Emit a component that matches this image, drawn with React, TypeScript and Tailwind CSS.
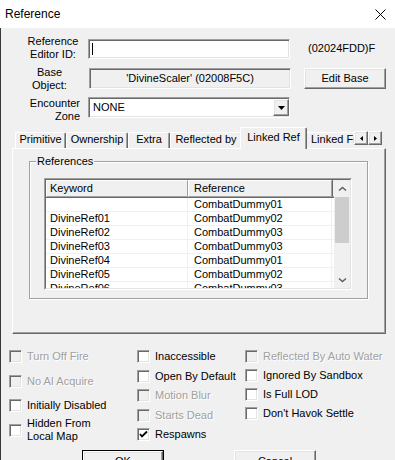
import React from "react";

const sunken =
  "border border-t-[#a0a0a0] border-l-[#a0a0a0] border-b-white border-r-white shadow-[inset_1px_1px_0_#696969,inset_-1px_-1px_0_#e3e3e3]";
const raised =
  "border border-t-white border-l-white border-b-[#696969] border-r-[#696969] shadow-[inset_-1px_-1px_0_#a0a0a0,inset_1px_1px_0_#e3e3e3]";

const rows = [
  ["", "CombatDummy01"],
  ["DivineRef01", "CombatDummy02"],
  ["DivineRef02", "CombatDummy03"],
  ["DivineRef03", "CombatDummy03"],
  ["DivineRef04", "CombatDummy01"],
  ["DivineRef05", "CombatDummy02"],
  ["DivineRef06", "CombatDummy03"],
];

const Check = ({
  label,
  checked = false,
  disabled = false,
  className = "",
}: {
  label: React.ReactNode;
  checked?: boolean;
  disabled?: boolean;
  className?: string;
}) => (
  <div className={`flex items-center gap-[5px] ${className}`}>
    <div
      className={`h-[13px] w-[13px] shrink-0 flex items-center justify-center ${sunken} ${
        disabled ? "bg-[#f0f0f0]" : "bg-white"
      }`}
    >
      {checked && (
        <svg width="9" height="9" viewBox="0 0 9 9">
          <polyline points="1,4 3,6.5 8,1.5" fill="none" stroke="#000" strokeWidth="1.8" />
        </svg>
      )}
    </div>
    <div
      className={`leading-[13px] whitespace-nowrap ${
        disabled ? "text-[#a0a0a0] [text-shadow:1px_1px_0_#fff]" : ""
      }`}
    >
      {label}
    </div>
  </div>
);

const Chevron = ({ down = false }: { down?: boolean }) => (
  <svg width="9" height="6" viewBox="0 0 9 6">
    <path
      d={down ? "M1 1.5 L4.5 4.5 L8 1.5" : "M1 4.5 L4.5 1.5 L8 4.5"}
      fill="none"
      stroke="#606060"
      strokeWidth="1.5"
    />
  </svg>
);

const tabBase =
  "shrink-0 border-t border-l border-white border-r border-r-[#696969] shadow-[inset_-1px_0_0_#a0a0a0] text-center leading-[13px] whitespace-nowrap overflow-hidden rounded-tl-[2px] rounded-tr-[2px]";

export default function App() {
  return (
    <div className="w-[395px] h-[460px] overflow-hidden bg-[#f0f0f0] font-['Liberation_Sans',Arial,sans-serif] text-[11px] text-black">
      {/* Title bar */}
      <div className="h-[28px] bg-white flex items-center justify-between pl-[5px] pr-[9px]">
        <span className="text-[12px]">Reference</span>
        <svg width="11" height="11" viewBox="0 0 11 11">
          <path d="M0.5 0.5 L10.5 10.5 M10.5 0.5 L0.5 10.5" stroke="#000" strokeWidth="1" />
        </svg>
      </div>

      <div className="h-[432px] border-l border-[#3a3a3a]">
        {/* Editor ID */}
        <div className="flex items-start pt-[7px]">
          <div className="ml-[17px] w-[70px] text-center leading-[12.5px]">
            Reference
            <br />
            Editor ID:
          </div>
          <div className={`mt-[4px] h-[20px] w-[202px] bg-white flex items-center pl-[3px] ${sunken}`}>
            <div className="h-[12px] w-px bg-black" />
          </div>
          <div className="ml-[18px] mt-[7px] leading-[12.5px]">(02024FDD)F</div>
        </div>

        {/* Base object */}
        <div className="flex items-start mt-[6px]">
          <div className="ml-[10px] w-[77px] text-center leading-[13px]">
            Base
            <br />
            Object:
          </div>
          <div className={`ml-px mt-[2px] h-[21px] w-[202px] flex items-center justify-center ${sunken}`}>
            'DivineScaler' (02008F5C)
          </div>
          <div className={`ml-[13px] mt-[2px] h-[21px] w-[82px] flex items-center justify-center ${raised}`}>
            Edit Base
          </div>
        </div>

        {/* Encounter zone */}
        <div className="flex items-start mt-[5px]">
          <div className="w-[79px] text-right leading-[13px]">
            Encounter
            <br />
            Zone
          </div>
          <div className={`ml-[8px] h-[21px] w-[202px] bg-white flex items-center ${sunken}`}>
            <span className="flex-1 pl-[4px]">NONE</span>
            <div className={`h-[17px] w-[16px] bg-[#f0f0f0] flex items-center justify-center ${raised}`}>
              <svg width="7" height="4" viewBox="0 0 7 4">
                <polygon points="0,0 7,0 3.5,4" fill="#000" />
              </svg>
            </div>
          </div>
        </div>

        {/* Tabs */}
        <div className="relative z-10 mt-[4px] ml-[14px] flex h-[22px] items-end">
          <div className="flex h-full w-[339px] items-end overflow-hidden">
            <div className={`${tabBase} mb-px h-[16px] w-[51px]`}>Primitive</div>
            <div className={`${tabBase} mb-px h-[16px] w-[62px]`}>Ownership</div>
            <div className={`${tabBase} mb-px h-[16px] w-[42px]`}>Extra</div>
            <div className={`${tabBase} mb-px h-[16px] w-[72px]`}>Reflected by</div>
            <div className={`${tabBase} relative z-10 -mx-[2px] h-[22px] w-[67px] bg-[#f0f0f0] pt-[3px]`}>
              Linked Ref
            </div>
            <div className={`${tabBase} mb-px h-[16px] w-[70px] text-left pl-[5px]`}>Linked From</div>
          </div>
          <div className="mb-[4px] flex">
            <div className={`h-[14px] w-[14px] flex items-center justify-center ${raised}`}>
              <svg width="3" height="5" viewBox="0 0 3 5">
                <polygon points="3,0 3,5 0,2.5" fill="#000" />
              </svg>
            </div>
            <div className={`h-[14px] w-[14px] flex items-center justify-center ${raised}`}>
              <svg width="3" height="5" viewBox="0 0 3 5">
                <polygon points="0,0 0,5 3,2.5" fill="#000" />
              </svg>
            </div>
          </div>
        </div>

        {/* Tab panel */}
        <div className="relative -mt-px ml-[11px] h-[186px] w-[374px] border border-t-white border-l-white border-r-[#696969] border-b-[#696969] shadow-[inset_-1px_-1px_0_#a0a0a0]">
          <div className="relative ml-[16px] mt-[12px] h-[138px] w-[339px] border border-[#a0a0a0] shadow-[inset_1px_1px_0_#fff,1px_1px_0_#fff]">
            <div className="absolute left-[6px] top-[-7px] bg-[#f0f0f0] px-px leading-[13px]">References</div>

            {/* List view */}
            <div className="ml-[14px] mt-[16px] h-[112px] w-[308px] border border-t-[#a0a0a0] border-l-[#a0a0a0] border-b-white border-r-white">
              <div className="flex h-full w-full border border-t-[#696969] border-l-[#696969] border-b-[#e3e3e3] border-r-[#e3e3e3] bg-white">
                <div className="h-full w-[288px] overflow-hidden">
                  <div className="flex h-[18px] border-b border-[#696969] bg-[#f0f0f0]">
                    <div className="w-[142px] shrink-0 border-t border-l border-white border-r border-b border-r-[#a0a0a0] border-b-[#a0a0a0] pl-[3px] leading-[15px]">
                      Keyword
                    </div>
                    <div className="w-[144px] shrink-0 border-t border-l border-white border-r border-b border-r-[#a0a0a0] border-b-[#a0a0a0] pl-[5px] leading-[15px]">
                      Reference
                    </div>
                    <div className="flex-1 border-l border-[#696969] border-b border-b-[#a0a0a0]" />
                  </div>
                  {rows.map(([k, r], i) => (
                    <div key={i} className="flex h-[14px] border-b border-[#f0f0f0] leading-[13px]">
                      <div className="w-[142px] shrink-0 border-r border-[#f0f0f0] pl-[4px]">{k}</div>
                      <div className="w-[144px] shrink-0 border-r border-[#f0f0f0] pl-[6px]">{r}</div>
                    </div>
                  ))}
                </div>
                <div className="flex h-full w-[16px] flex-col bg-[#f0f0f0]">
                  <div className="flex h-[17px] items-center justify-center">
                    <Chevron />
                  </div>
                  <div className="mx-px h-[46px] bg-[#cdcdcd]" />
                  <div className="flex-1" />
                  <div className="flex h-[17px] items-center justify-center">
                    <Chevron down />
                  </div>
                </div>
              </div>
            </div>
          </div>
        </div>

        {/* Checkboxes */}
        <div className="flex">
          <div className="ml-[8px] flex w-[128px] flex-col">
            <Check className="mt-[16px] h-[13px]" label="Turn Off Fire" disabled />
            <Check className="mt-[12px] h-[13px]" label="No AI Acquire" disabled />
            <Check className="mt-[11px] h-[13px]" label="Initially Disabled" />
            <Check
              className="mt-[5px] h-[26px]"
              label={
                <>
                  Hidden From
                  <br />
                  Local Map
                </>
              }
            />
          </div>
          <div className="flex w-[108px] flex-col gap-[6.5px] pt-[16px]">
            <Check className="h-[13px]" label="Inaccessible" />
            <Check className="h-[13px]" label="Open By Default" />
            <Check className="h-[13px]" label="Motion Blur" disabled />
            <Check className="h-[13px]" label="Starts Dead" disabled />
            <Check className="h-[13px]" label="Respawns" checked />
          </div>
          <div className="flex flex-col gap-[6px] pt-[16px]">
            <Check className="h-[13px]" label="Reflected By Auto Water" disabled />
            <Check className="h-[13px]" label="Ignored By Sandbox" />
            <Check className="h-[13px]" label="Is Full LOD" />
            <Check className="h-[13px]" label="Don't Havok Settle" />
          </div>
        </div>

        {/* Buttons */}
        <div className="mt-[7px] flex">
          <div className="ml-[81px] h-[23px] w-[82px] border border-black">
            <div className={`flex h-full w-full items-center justify-center ${raised}`}>OK</div>
          </div>
          <div className={`ml-[70px] flex h-[23px] w-[82px] items-center justify-center ${raised}`}>Cancel</div>
        </div>
      </div>
    </div>
  );
}
